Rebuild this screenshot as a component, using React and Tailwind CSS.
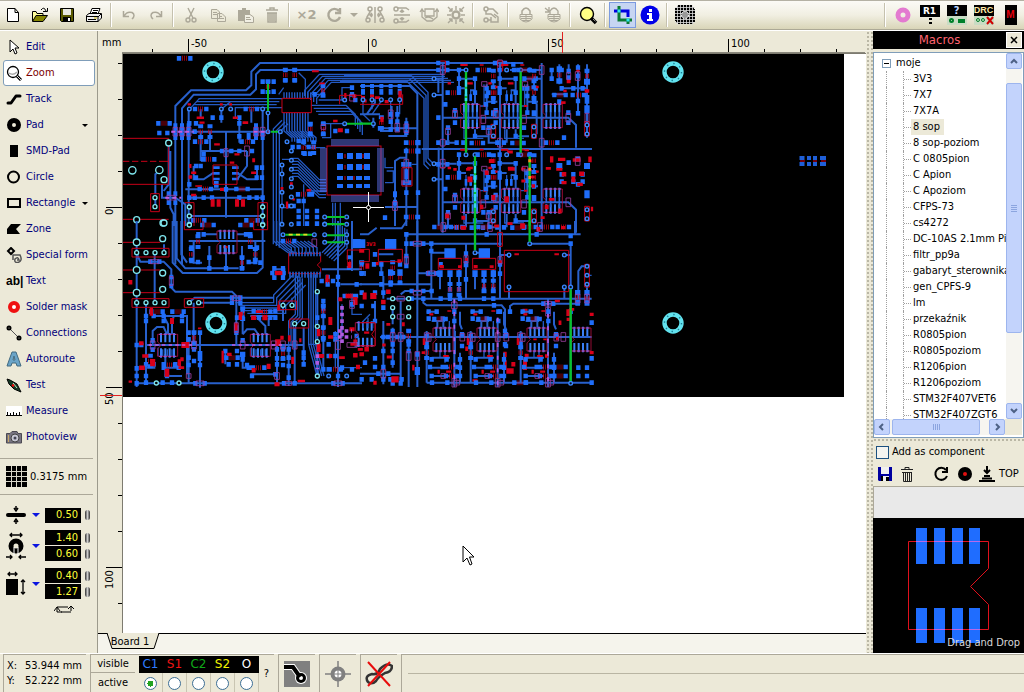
import React, { useState } from 'react';
import clsx from 'clsx';

/* ---------- small drawing helpers ---------- */

const box = ([x, y, w = 13, h = 14]) => `M${x - w / 2} ${y - h / 2}h${w}v${h}h${-w}z`;
const mark = ([x, y, w, h]) => box([x, y, w * 0.85, h * 0.85]);
const nums = (text) => text.trim().split(/\s+/).map((item) => item.split(',').map(Number));

// resistor bodies: two pads with a red outline between them
const upright = ([x, y]) => ({
  pads: box([x, y - 16, 15, 12]) + box([x, y + 16, 15, 12]),
  body: box([x - 5, y, 2, 13]) + box([x + 5, y, 2, 13]) + box([x, y, 2, 13]),
});
const flat = ([x, y]) => ({
  pads: box([x - 17, y, 13, 14]) + box([x + 17, y, 13, 14]),
  body: box([x, y, 2, 15]) + box([x - 6, y, 2, 15]) + box([x + 6, y, 2, 15]),
});

function Bus({ d, n, dx = 0, dy = 0, w = 4 }) {
  return (
    <g fill="none" stroke="#2359c4" strokeWidth={w}>
      {Array.from({ length: n }, (_, i) => (
        <path key={i} d={d} transform={`translate(${i * dx} ${i * dy})`} />
      ))}
    </g>
  );
}

function Block({ x = 0, y = 0, tracks = '', thin = '', red = '', pads = '', rv = '', rh = '', marks = '', links = '', vias = '', rings = '' }) {
  const list = (t) => (t ? nums(t) : []);
  const parts = [...list(rv).map(upright), ...list(rh).map(flat)];
  return (
    <g transform={`translate(${x} ${y})`}>
      <path d={thin} fill="none" stroke="#2258c0" strokeWidth="4" />
      <path d={tracks} fill="none" stroke="#2860cc" strokeWidth="6" />
      <path d={list(pads).map(box).join('') + parts.map((p) => p.pads).join('')} fill="#1f6dfa" />
      <path d={list(marks).map(mark).join('') + parts.map((p) => p.body).join('')} fill="#d8001a" />
      <path d={red} fill="none" stroke="#c80018" strokeWidth="3" />
      <path d={list(links).map(([a, b, w = 14, h = 26]) => box([a, b, w, h])).join('')} fill="none" stroke="#9a3f9e" strokeWidth="2.500" />
      {list(vias).map(([a, b], i) => (
        <circle key={i} cx={a} cy={b} r="5.500" fill="#03101f" stroke="#3b86ff" strokeWidth="4" />
      ))}
      {list(rings).map(([a, b, r = 6], i) => (
        <circle key={i} cx={a} cy={b} r={r} fill="#000" stroke="#7fe6ee" strokeWidth="4" />
      ))}
    </g>
  );
}

function Soic({ x, y, w = 58, h = 70 }) {
  const cols = [10, 23, 36, 49];
  return (
    <g transform={`translate(${x} ${y})`}>
      <path d={cols.map((c) => box([c, 10, 6, 28]) + box([c, h - 10, 6, 28])).join('')} fill="#3a80f5" />
      <path d={`M0 0H${w}V${h}H0V${h * 0.65}L10 ${h * 0.5}L0 ${h * 0.35}Z`} fill="none" stroke="#b01040" strokeWidth="2.500" />
      <path d={`M4 0H${w - 4}M4 ${h}H${w - 4}`} stroke="#a055dd" strokeWidth="3" strokeDasharray="9 5" />
    </g>
  );
}

function Hole({ x, y }) {
  return (
    <g>
      <circle cx={x} cy={y} r="8.5" fill="none" stroke="#62e2ee" strokeWidth="4.4" />
      <circle cx={x} cy={y} r="8.5" fill="none" stroke="#1a7d94" strokeWidth="1.4" strokeDasharray="1.4 5.28" />
    </g>
  );
}

// one channel of the upper right matrix, repeated
const channel = {
  tracks: 'M297 57V112M345 83V118M380 100V185M345 235V256H385M264 238V275H290M285 200V180M297 112H318M400 90V110M297 83H345M380 152H412M330 118H345V160M318 235V275',
  thin: 'M318 118V160M332 118V150M360 165H372V100M312 235V262H370',
  pads: '297,57 297,83 345,83 380,112 380,135 345,125 297,112 380,185 400,152 345,255 370,230 256,160 285,215 285,178 264,230 332,140,8,20 318,140,8,20 400,187,14,18 310,275 290,275',
  rv: '400,75 400,125',
  rh: '280,125 352,276 370,57',
  marks: '312,42,26,7 365,42,14,6 268,97,12,8 375,165,12,7 330,97,20,8 410,108,10,8',
  links: '373,99,16,14 285,189,14,22 370,205,14,24 264,241,14,18',
  red: 'M393 220H407V262H393Z',
  vias: '318,57 400,228 400,255',
};

// filter stage along the lower edge
const stage = {
  tracks: 'M200 272H235M215 300H255M232 300V322M200 330V415M215 410H270M200 350V485M215 440H270M215 465H270M300 272V310L306 325M250 300V325M300 395V485',
  thin: 'M240 390V410M255 390V425M268 322V300',
  pads: '206,272 230,272 206,293 248,293 200,345 200,370 215,415 260,415 210,438 215,465 248,438 300,415 306,340 306,375 216,485 262,485 283,272 283,300 300,440 300,465',
  rh: '240,294 275,438 275,465',
  rv: '200,395',
  marks: '214,280,14,8 268,270,14,6 258,405,20,7 266,452,18,8 192,362,9,24 236,452,8,14',
  links: '206,349,14,24 250,465,14,14 290,485,18,14 307,349,14,22',
};

function CircuitBoard() {
  const pins = Array.from({ length: 24 }, (_, i) => 332 + i * 2);
  const sidePins = Array.from({ length: 22 }, (_, i) => 148 + i * 2);
  const third = 'scale(.3333333)';
  return (
    <svg className="block h-auto w-full bg-black" viewBox="123 53 721 343" role="img" aria-label="Circuit board">
      {/* upper left */}
      <g transform={`translate(122 50) ${third}`}>
        <Bus d="M548 135V118L592 70H960" n={5} dx={9} dy={6} />
        <Bus d="M568 163H672L700 190V225" n={4} dx={7} dy={9} />
        <Bus d="M486 185V240L510 260V272" n={10} dx={8} />
        <Bus d="M486 142V124" n={11} dx={8} />
        <Bus d="M510 322H528L592 386H612" n={7} dy={9} />
        <Bus d="M480 208L454 234V580" n={3} dx={9} dy={5} />
        <Bus d="M230 143H480" n={3} dx={-8} dy={9} />
        <Block
          tracks="M160 640V165L207 118H372L388 103V62L414 36H960M180 640V172L215 131H385L402 115V70L415 57H960M200 525V175M148 242H440M422 175V525M312 242V500M438 95V242M298 175V215M352 200V275M236 175V200M388 175V215M264 242V300M236 242V330M375 300V345L345 385M235 300H375M140 280V400L125 420M120 400V440H160L190 460V525M100 440V468M100 430V370L112 360M215 345V385H245L275 365M405 355V385H375L345 365M190 415H420M200 440H420M200 467V525M422 467V525M200 495H422M145 300V470L155 490V525"
          thin="M202 175L232 143M298 175L325 152M340 200V170H480M530 65L550 85V125M600 100V130H570M470 130L485 110M590 147H665M605 218H665M626 218V260H600M690 110H660V147M480 340V460M505 325H480M610 290H560L530 270M540 240V262M500 470H480V520M545 400V525M560 420H640M640 455V525M632 455V525M655 455V525"
          pads="438,92 455,92 490,57 518,57 490,88 518,88 422,92 422,122 455,122 202,217 222,217 298,200 352,200 352,217 272,200 160,228,12,22 160,256,12,22 180,228,12,22 180,256,12,22 200,228,12,22 200,256,12,22 218,242 402,228,12,22 402,256,12,22 422,256,12,22 380,256,12,22 352,256 236,345 222,345 404,350 420,350 404,380 420,380 245,310 245,325 300,300 328,300 352,300 390,300 222,380 202,400 245,440 218,440 202,440 382,440 404,440 422,440 270,440 352,440 283,350,20,8 283,367,20,8 283,384,20,8 340,350,20,8 340,367,20,8 340,384,20,8 283,400,14,20 312,415 140,428,12,14 160,428,12,14 140,455,12,14 160,455,12,14 565,220 565,248 604,218 604,248 578,130 603,105 603,130 690,130 690,110 700,147 530,270 545,270 560,288 575,288 530,288 512,288 548,308 564,308 530,450 545,450 530,480 555,480 585,480 530,498 555,498 585,498 530,518 555,518 585,518 570,430 640,240 675,240 112,246 136,246 500,465 515,465"
          rh="188,22 126,217 236,174 388,174 250,414 360,414 236,272 376,272 260,325 545,430 230,508 390,508"
          rv="438,107 490,72 518,72 603,118 565,234 604,234 236,242 264,242 545,290 575,290"
          marks="202,160,12,8 298,160,10,8 326,160,10,8 580,61,24,7 235,200,26,9 240,215,18,8 340,200,18,9 370,215,20,10 345,310,18,8 215,365,18,9 205,378,12,12 395,365,18,9 230,405,24,6 330,335,16,8 272,456,14,26 290,456,14,26 345,456,14,26 363,456,14,26 300,415,14,12 205,345,8,14 600,97,20,6 670,135,8,22 640,210,16,8 480,412,10,10 508,400,10,14 495,462,8,24 515,445,8,8 560,418,16,9 655,238,18,14 697,135,14,12 285,280,20,8 395,328,10,14 215,432,18,8"
          red="M3 262H140V400H3M3 331H22M30 331H49M57 331H76M84 331H103M111 331H140M86 428H112V482H86ZM3 505H140M188 455H216V525M408 525V455H436V525M273 342H345V400H273ZM480 142H568V185H480ZM653 133H720M653 133V160"
          links="160,242 180,242 200,242 402,242 422,242 148,440,26,14 375,300,14,30 690,140,14,20 604,228,14,14 312,305,12,24"
          vias="202,174 298,174 326,174 422,174 438,186 438,242 475,242 508,328 480,342 508,355 508,383 480,369 508,408 480,424 508,438 480,465 508,465 668,147 668,218 495,272 508,300 608,498 674,498 608,519"
          rings="140,276,9 31,358,11 112,357,11 126,386,9 99,440 99,467 202,468 422,468 202,495 422,495 44,506,9 123,516,9 202,520 422,520"
        />
        <path d="M438 98V180M447 242H468M675 218H720M615 498H668M615 519H668" stroke="#08c22c" strokeWidth="6" />
        <path d="M148 242H215M395 242H440M130 440H178" stroke="#c45ae0" strokeWidth="6" strokeDasharray="12 9" />
      </g>

      {/* upper right */}
      <g transform={`translate(360 50) ${third}`}>
        <Bus d="M-60 92H142L192 142V340L206 354" n={3} dx={6} dy={-9} />
        <Block
          tracks="M-60 36H490M-60 57H320M0 105H150L172 128V720M248 36V545M236 290V525M420 36V545M545 36V525M235 83V125M218 83H245M218 132H245M218 338H290M218 385H245M248 200H625L648 222V290M185 294H696M0 190H60M95 165V240H60M112 165V230M40 200V230M139 200V255H85M60 232H174M105 525V330L120 320H140M139 290V525M75 468H172M45 145V155L20 190M450 57H545M490 83H545M575 57V83M598 40V100M626 40V70M654 40V190M681 40V260M248 454H625L648 476V545M445 200H480M520 130L530 160V250M605 112H680M575 130H620"
          thin="M9 150V190L30 210M36 150V175M64 150L36 190M92 150V190M119 150V190M75 320V350H100M75 395H100M80 360H100V395M155 340H172"
          pads="92,190 112,190 92,212 112,212 92,235 112,235 139,222,12,22 139,245 60,232 174,275,16,16 174,300,16,16 139,275 139,300 174,425 139,425 174,498 139,498 75,500 105,430,12,18 105,455,12,18 9,105,12,12 36,105,12,12 64,105,12,12 92,105,12,12 119,105,12,12 9,122,12,18 36,122,12,18 64,122,12,18 92,122,12,18 119,122,12,18 235,36 262,36 235,57 262,57 235,275 262,275 235,200 405,36 435,36 460,40 462,57 598,55,16,18 598,90,18,16 626,80 626,60 654,50 681,60 681,92,18,18 654,75 605,112 640,112 668,112 654,150 681,145,14,26 681,175,16,24 654,187 598,152 612,260 625,185 625,215 605,57 575,83 575,57 598,345,18,18 626,335 654,325 681,345,18,18 681,430,16,24 654,400 605,370 640,370 668,370 605,392 640,392 668,392 235,340 262,340 130,340 148,340 130,395 148,395 139,370,12,30"
          rh="510,83 510,112 600,132 655,132 155,275 155,300 155,498 575,275"
          rv="598,72 681,75 64,215"
          marks="15,150,12,10 52,140,18,10 80,152,14,12 36,135,14,10 9,140,14,12 120,130,12,26 66,205,12,18 626,92,14,12 654,60,12,8 681,120,16,12 615,120,12,8 610,155,16,10 605,325,26,12 650,327,28,12 690,325,12,20 612,370,16,16 665,368,18,16 640,385,14,20 612,395,18,12 660,400,20,12 598,355,22,10 575,325,12,22 565,352,18,10 450,303,20,10 500,298,16,7 455,354,26,12 490,354,16,10 510,330,12,10 510,358,12,10 518,378,14,8 696,474,8,16"
          red="M0 160H128V130M126 350H156V405H126ZM241 30H256V66M241 350H256M413 30H428V60H413ZM674 212H688V255H674ZM674 466H688V510H674Z"
          links="248,57 248,338 248,275,14,20 420,36,14,18 420,275 92,190 112,230 139,232 545,57 545,275 653,75 681,200,12,26 653,330 139,360,14,70 105,465 626,75,12,20 625,200 625,454"
          vias="222,83 222,132 222,338 222,385 482,57 509,57 482,311 509,311 345,311 681,222 681,249 40,218 681,476 681,503 92,146 64,146 36,146 119,146 9,146"
        />
        {[0, 254].map((dy) =>
          [0, 122, 247].map((dx) => (
            <g key={`${dx}-${dy}`} transform={`translate(${dx} ${dy})`}>
              {dx < 247 && <Block {...channel} />}
              <Soic x={302} y={160} />
              <path d="M312 182V200M325 182V215M338 182V200M351 182V215" stroke="#2a66dc" strokeWidth="5" />
            </g>
          ))
        )}
        <Block marks="395,330,20,14 325,355,16,10 380,365,14,16 330,385,18,20 285,355,12,10 400,440,14,18 440,445,16,22 365,468,12,16 310,500,14,14 262,495,14,16 520,405,12,12 490,390,14,10 560,468,14,16 575,445,20,10 600,480,12,18 450,518,18,10 548,500,14,10" />
        <path d="M318 62V305M482 62V305M509 316V525M345 316V525M0 218H34" stroke="#08c22c" strokeWidth="7" />
        <path d="M318 85V150M345 345V470" stroke="#35d8e8" strokeWidth="7" strokeDasharray="22 6" />
        <path d="M509 325V400" stroke="#ff8a1c" strokeWidth="8" strokeDasharray="9 16" />
      </g>

      {/* lower left */}
      <g transform={`translate(122 220) ${third}`}>
        <Bus d="M515 160L455 222V245H340" n={5} dx={9} dy={8} />
        <Bus d="M560 160V370L585 465" n={4} dx={7} />
        <Bus d="M520 160V280L500 300V372" n={4} dx={7} dy={4} />
        <Bus d="M455 0V60L478 80L505 100" n={3} dx={9} />
        <Bus d="M600 95L640 55V0" n={6} dx={7} dy={5} />
        <Bus d="M508 100V80L480 60" n={8} dx={11} />
        <Block
          tracks="M152 0V125L182 156H405L422 140V0M164 0V112L190 142H350M178 0V100L195 125M44 0V498M98 95V245M72 245V490M126 95V70M45 100L55 122H125L148 145V200L160 212H330L343 225V372M200 245L218 230H455M230 245H330M200 60H430M312 80V142M262 75V142M360 75V142M215 60V125H240M400 60V125H380M245 40H285M345 40H385M45 487H720M70 372H545M95 285H195V460M92 372V330L105 318H125L135 340M215 245V360M125 285L138 310V340M155 285L150 310V340M200 360V485L230 487M234 335V500M240 372H360M343 300V372M385 285H465M405 290L430 315V340M440 290V315M362 340L375 325H398L412 345M362 260V340M362 400V440H390M500 372V495M518 320V485M545 320V430M483 255V300M586 212V465M604 240V450M648 0V498M690 150V0M385 460H465M465 370V495M120 440H180M130 400V465H180M72 440H100M310 390V430M455 145H490M600 145H720M655 190H720"
          thin="M108 405V380M122 405V385M136 405V385M150 405V385M388 405V380M402 405V385M416 405V385M430 405V385M510 230V255M640 330V440H720M660 250V350M690 220V280H720M560 370H586"
          pads="229,40 245,40 385,40 372,40 208,80 208,120 228,123 405,80 400,123 380,123 262,142 312,142 360,142 415,125 262,110 360,110 457,142 483,142 457,170 483,170 617,168 648,168 617,190 648,190 704,68,24,28 704,190 85,122 112,122 148,168,12,14 148,195,12,14 330,230 355,230 330,245 355,245 362,268 345,290 362,290 343,320 343,335 125,285 180,285 125,300 180,300 95,285 72,285 72,300 395,270 460,270 395,290 460,290 362,358 362,400,16,16 375,432 362,415 200,335 216,335 234,335 200,355 216,385 234,405,14,30 200,410 216,420 200,432 234,432 95,430 72,430 72,465 44,465 72,485 44,372 58,372 44,442 92,358 92,386 125,430 160,430 125,440 170,440 135,465 150,485 122,485 220,487 248,487 44,487 380,440 465,430 390,465 460,460 465,412 483,412 483,432 465,385 483,385 500,385 310,390 345,390 320,430 345,430 500,410 500,435 545,395 545,410 545,430 500,470 518,487 486,487 604,240 604,262 604,285 604,320 620,370 640,340 620,445 604,445 586,290 640,355 690,225 690,250 640,405 620,405 604,355 648,465 634,487 662,487 690,445 660,440 704,370 704,345"
          rh="258,12 372,12 500,60 616,180 105,272 168,272 428,272 428,290 410,440 142,432 640,445 685,225 330,410 468,156"
          rv="228,62 400,100 208,100 385,62 360,125 85,420 483,398 362,278 604,270 604,335 682,125 216,350"
          marks="25,184,14,16 233,322,12,6 58,367,16,14 70,405,22,12 88,272,12,28 92,425,18,26 60,440,20,16 150,300,14,22 180,415,12,14 172,425,12,24 135,455,16,28 25,482,12,8 355,285,12,28 395,290,18,16 430,290,16,18 412,272,24,10 470,260,10,20 468,365,20,24 480,350,12,14 502,352,10,22 512,418,10,26 465,490,18,14 538,480,26,9 535,358,8,14 440,436,14,18 395,448,14,16 302,408,8,44 322,400,16,12 342,318,12,26 590,380,14,30 598,405,18,14 626,405,12,14 625,300,14,28 655,235,14,14 680,225,22,16 700,240,16,28 690,325,18,14 700,365,14,22 715,385,18,10 590,335,12,26 660,410,20,10 700,403,16,16 708,438,14,16 470,156,26,14 616,172,10,26 682,132,14,22 692,370,16,10 626,348,18,12 310,78,16,8 190,372,28,22 178,440,20,10"
          red="M3 64H115M3 147H115M3 215H115M30 82H141V108H30ZM30 233H141V259H30ZM187 0V26H243V0M395 0V26H437V0M187 233H245V259H187ZM470 240H524V266H470ZM503 294H560V321H503ZM500 97H596V122L586 132L596 142V158H500ZM676 118V87H720"
          links="98,122,26,12 148,180,12,26 343,232,24,14 343,320,12,30 362,372,14,24 92,372,14,24 216,372,14,24 200,465,14,14 483,372,14,24 518,372,14,24 455,372,14,24 234,487,24,14 465,465,14,20 577,65,14,22 648,487,24,14 648,372 690,372,30,14 690,250,14,24 500,487,18,12"
          rings="126,6,9 44,64,10 122,53,9 44,95 72,95 99,95 126,95 44,147,10 122,156,9 44,215,10 122,205,9 44,245 72,245 99,245 126,245 202,12 422,12 202,245 230,245 483,253 510,253 518,308 545,308 586,212 586,316 586,362 586,465 103,486 171,486"
          vias="483,41 577,41 608,10 608,41 608,64 674,10 674,41 674,64 480,10 508,10 620,465 674,465"
        />
        <path d="M660 255V368M648 330H690M648 348H690M586 400V445" stroke="#b05ae0" strokeWidth="11" strokeDasharray="11 9" />
        <Bus d="M504 92V106" n={11} dx={9} w={5} />
        <Bus d="M504 152V170" n={11} dx={9} w={5} />
        <Soic x={285} y={30} w={60} h={66} />
        <Soic x={107} y={340} w={60} h={66} />
        <Soic x={385} y={340} w={60} h={66} />
        <Soic x={700} y={305} w={60} h={69} />
        <path d="M615 10H668M615 43H668M615 64H668M490 41H570" stroke="#08c22c" strokeWidth="6" />
        <path d="M500 41H560" stroke="#e8d820" strokeWidth="5" strokeDasharray="12 10" />
        <path d="M80 372H210M330 372H480" stroke="#c45ae0" strokeWidth="5" strokeDasharray="10 10" />
      </g>

      {/* lower right */}
      <g transform={`translate(360 220) ${third}`}>
        <Block
          tracks="M0 40H25L50 20M60 22H125L140 0M139 40H662M160 68H425M172 0V348M214 68V233M510 68H632V480M0 190H215M122 220L135 210H215M80 233H695M190 233V245L200 253H425L435 265V340M450 272V255L460 248H655M60 348H695M70 300V490M122 240V480M98 320V440M0 458H120M200 485H695M146 348V498M172 348V498M98 260V310M64 120V165M139 45V130M100 100H55M215 95H260M240 150V205M270 160V205M297 145V205M318 70V233M345 150V205M372 160V205M400 145V205M345 95H375M420 0V233M447 110V102H420M613 102H632M447 200V233M613 200V233M655 230V150L665 136H685M681 190V235M175 157H235M283 233V498M413 290V498M564 233V498M285 330V400M70 233V165M15 150V165M645 0V40M45 240V300"
          thin="M10 322V300L30 280M24 322V290M38 322V300M695 163H685"
          pads="5,68,22,26 92,70,34,32 270,97,34,30 373,97,34,30 5,130 5,158 64,130 92,155,16,20 120,155,16,20 64,158 120,130 92,185 120,185 42,130 45,100 139,105 139,135 64,190 92,190 242,130 240,158,16,20 270,158,16,20 297,158,16,20 270,205 297,205 345,158,16,20 372,158,16,20 400,158,16,20 372,205 400,205 318,98 318,130,14,18 318,175 420,130 420,158 204,157 228,157 214,68 214,90 155,68 190,68 139,40 139,68 420,272 450,272 402,253 380,40 530,40 632,45 632,68 270,233 300,233 372,233 400,233 242,233 155,210 190,210 155,233 190,233 215,210 5,215 45,215 5,255 40,255 70,215 70,260 45,300 70,348 84,348 112,348 130,348 98,330 98,370 70,390 98,390 98,425 45,412 70,438 45,438 15,425 55,458 85,458 5,475 35,475 70,475 98,487 122,487 172,400 172,450,16,24 146,330 146,370 146,390 653,215,16,16 681,215,16,16 653,245,14,18 681,245,14,18 550,248 580,248 632,272 695,305 695,412 695,485 681,440 681,465 655,440 655,465 435,345 435,370 435,330"
          rh="240,18 290,18 372,18 510,18 560,18 610,18 600,438 600,465 480,485 108,475"
          rv="98,140 270,205 297,205 372,195 400,195 5,140 92,170 120,170 681,232 653,230 146,345"
          marks="22,135,14,20 52,128,10,12 118,120,14,12 5,90,18,12 245,137,16,12 300,137,14,10 320,115,10,12 347,137,14,12 395,137,14,10 420,122,14,10 470,100,16,7 590,100,16,7 310,20,20,14 410,15,18,10 488,15,18,20 610,20,16,12 535,25,14,16 85,212,16,16 40,225,22,22 14,225,14,24 70,243,16,16 495,270,18,16 625,275,14,24 592,240,18,8 635,265,18,10 695,280,14,12 525,355,12,6 555,355,12,6 495,430,14,40 500,405,14,16 435,430,12,28 450,450,26,20 435,400,12,18 460,430,14,16 20,385,16,16 5,400,16,14 88,408,18,10 130,310,10,14 105,475,26,22 45,485,12,14 600,305,10,16 560,405,12,12 695,395,14,12 625,295,12,12 592,350,10,18 160,440,8,20 190,395,12,10 85,310,14,10 72,372,12,10 345,478,18,8 20,335,18,8 320,383,10,16"
          red="M433 88H626V212H433ZM0 85H28V122H0M55 85H127V122H55ZM235 112H304V145H235ZM338 112H407V145H338ZM413 34H427V76H413ZM674 130H688V198H674ZM0 305H45M0 375H45V355L35 340L45 325V305"
          links="172,68,24,14 214,157,24,14 139,118,12,22 318,115,12,22 420,118,12,22 122,233,22,14 122,287,20,14 172,215,24,14 98,348 122,348 146,405 283,253,16,20 564,248,20,14 564,272 70,458 172,405 413,348 200,348 330,348 480,348 610,348 653,233 681,233 283,485 413,485 564,485 250,18 540,18 390,18"
          vias="345,95 509,68 447,102 613,102 447,198 613,198 632,198 681,136 681,163 681,190 632,487"
          rings="98,233 146,233 98,260 146,260 98,287 146,287"
        />
        <text x="18" y="74" fontSize="15" fill="#e3001b" fontWeight="bold">3V3</text>
        {[0, 132, 282, 414].map((dx) => (
          <g key={dx} transform={`translate(${dx} 0)`}>
            {dx < 400 && <Block {...stage} />}
            <Soic x={219} y={321} w={60} h={69} />
          </g>
        ))}
        <path d="M345 0V88M509 0V62M632 205V480" stroke="#08c22c" strokeWidth="7" />
        <path d="M283 235V498M413 290V498M564 240V498" stroke="#b05ae0" strokeWidth="5" strokeDasharray="12 26" />
      </g>

      {/* processor in the middle */}
      <rect x="327" y="145" width="54" height="49" fill="#000" stroke="#c80018" />
      <path d={pins.map((p) => `M${p} 138v7M${p} 194v7`).join('')} stroke="#5d6fe8" />
      <path d={sidePins.map((p) => `M320 ${p}h7M377 ${p}h7`).join('')} stroke="#5d6fe8" />
      <path
        d={[340, 350, 359, 367].flatMap((a) => [155, 166, 177, 185].map((b) => box([a, b, 6, b > 170 ? 4 : 6]))).join('')}
        fill="#1f6dfa"
      />
      <path d="M345 153v4M345 164v4M345 175v4M363 153v4M363 164v4M354 175v4" stroke="#d00018" />

      {/* loose parts at the right of the board */}
      <path d={nums('802,157,5,4 802,163,5,4 809,157,4,4 809,163,4,4 815,157,4,4 815,163,4,4 823,157,6,4 823,163,6,4').map(box).join('')} fill="#1f5fd8" />
      <path d="M800 160h5M813 160h4M821 160h5" stroke="#e3001b" />

      <Hole x={213} y={71} />
      <Hole x={216} y={322} />
      <Hole x={673} y={71} />
      <Hole x={673} y={322} />
      <path d="M368.500 191V221M353 206.500H384" stroke="#fff" />
      <circle cx="368.500" cy="206.500" r="2" fill="#000" stroke="#fff" />
    </svg>
  );
}

/* ---------- icons ---------- */

function Svg({ size = 20, children, ...rest }) {
  return (
    <svg width={size} height={size} viewBox={`0 0 ${size} ${size}`} fill="none" aria-hidden="true" className="shrink-0" {...rest}>
      {children}
    </svg>
  );
}

const grey = '#aca899';

const icons = {
  fresh: <path d="M4.500 3.500H12L15.500 7.500V16.500H4.500ZM12 3.500V7.500H15.500" fill="#fff" stroke="#000" />,
  open: (
    <>
      <path d="M2.500 16V6.500H6L7 8.500H13V10" fill="#ffff9c" stroke="#000" />
      <path d="M2.500 16.500L6 10.500H17.500L13 16.500Z" fill="#848400" stroke="#000" />
      <path d="M11 5Q14 1 16 6M17.500 3V6.500H13" stroke="#000" />
    </>
  ),
  save: (
    <>
      <path d="M3.500 3.500H16.500V16.500H4.500L3.500 15.500Z" fill="#5a5a00" stroke="#000" />
      <rect x="6" y="4" width="8" height="6" fill="#e8e8e0" />
      <rect x="6" y="12" width="8" height="5" fill="#000" />
      <rect x="11" y="13" width="2" height="3" fill="#fff" />
    </>
  ),
  print: (
    <>
      <path d="M6 9L8 3.500H16L14 9Z" fill="#fff" stroke="#000" />
      <path d="M2.500 10.500L5 8.500H17.500V13L14 16.500H2.500Z" fill="#eee" stroke="#000" />
      <path d="M2 11.500H14V17M9 5.500H14M8 7.500H13M14 12L17 9M4 14.500H12" stroke="#000" />
      <path d="M10 13H13" stroke="#c8b400" />
    </>
  ),
  undo: <path d="M4.500 6V11.500H10M5 11Q8 6 13 7.500Q17 10 13 14" stroke={grey} strokeWidth="1.5" />,
  redo: <path d="M15.500 6V11.500H10M15 11Q12 6 7 7.500Q3 10 7 14" stroke={grey} strokeWidth="1.5" />,
  cut: (
    <g stroke={grey} strokeWidth="1.4">
      <path d="M7 3L12 13M13 3L8 13" />
      <circle cx="7" cy="15" r="2" />
      <circle cx="13" cy="15" r="2" />
    </g>
  ),
  copy: <path d="M3.500 4.500H9L11.500 7V13.500H3.500ZM5 7.500H9M5 9.500H9M9.500 8.500H14L17.500 12V16.500H9.500ZM11 11.500H14M11 13.500H16" fill="#ece9d8" stroke={grey} />,
  paste: (
    <>
      <path d="M3 5H7V3H11V5H15V16H3Z" fill={grey} />
      <path d="M9.500 9.500H15L18.500 12V17.500H9.500ZM11 12.500H15M11 14.500H16" fill="#f1efe4" stroke={grey} />
    </>
  ),
  trash: <path d="M4 5H16M8 5V3H12V5M5 8H15M6 8V17H14V8M8 8V16M10 8V16M12 8V16" stroke={grey} strokeWidth="1.5" />,
  rotate: <path d="M15 6A6 6 0 1 0 16 12M16 3V8H11" stroke={grey} strokeWidth="2.4" />,
  mirror: (
    <g stroke={grey} strokeWidth="1.5">
      <path d="M10 2V18M8 10H5M12 10H15M5 5V7L2 12V14M15 5V7L18 12V14M7 8L5 10L7 12M13 8L15 10L13 12" />
      <circle cx="5" cy="4" r="2" />
      <circle cx="15" cy="4" r="2" />
      <circle cx="3" cy="15" r="2" />
      <circle cx="17" cy="15" r="2" />
    </g>
  ),
  flip: (
    <g stroke={grey} strokeWidth="1.5">
      <path d="M2 10H18M10 8V5M10 12V15M5 3H14L17 5M5 17H14L17 15M8 7L10 5L12 7M8 13L10 15L12 13" />
      <circle cx="4" cy="4" r="2" />
      <circle cx="4" cy="16" r="2" />
    </g>
  ),
  snap: <path d="M6 4H15V11H6ZM3 4V12L8 16H13L18 12V4M1 7L3 4L5 7M16 7L18 4L20 7M6 13Q10 11 14 14" stroke={grey} strokeWidth="1.3" />,
  center: (
    <g stroke={grey} strokeWidth="1.4">
      <circle cx="10" cy="10" r="3.5" strokeWidth="2.400" />
      <path d="M10 1V5M10 15V19M1 10H5M15 10H19M2 2L6 6M18 2L14 6M2 18L6 14M18 18L14 14M3 6H6V3M17 6H14V3M3 14H6V17M17 14H14V17" />
    </g>
  ),
  shape: (
    <g stroke={grey} strokeWidth="1.5">
      <circle cx="5" cy="4" r="2" />
      <circle cx="5" cy="15" r="2" />
      <path d="M5 6V9H10L15 13M7 4H12L17 9M10 12V17H17V12L13 9M7 15H10" />
    </g>
  ),
  lock: (
    <>
      <path d="M6 9V6Q10 0 14 6V9" stroke={grey} strokeWidth="1.5" />
      <path d="M4 9.500H16V14Q10 20 4 14Z" stroke={grey} />
      <path d="M4 11.500H16M5 13.500H15M6 15.500H14M10 10V16" stroke={grey} />
    </>
  ),
  unlock: (
    <>
      <path d="M7 9V6Q11 0 15 6V9M2 3L7 7M2 7H6M6 2V6" stroke={grey} strokeWidth="1.3" />
      <path d="M5 9.500H17V14Q11 20 5 14Z" stroke={grey} />
      <path d="M5 11.500H17M6 13.500H16M7 15.500H15M11 10V16" stroke={grey} />
    </>
  ),
  loupe: (
    <>
      <circle cx="9" cy="9" r="6.5" fill="#ffff84" stroke="#000" strokeWidth="1.4" />
      <path d="M13 13L18 18" stroke="#000" strokeWidth="3.6" />
      <path d="M15 14L18 17" stroke="#ddd" strokeDasharray="1 1" />
    </>
  ),
  crop: (
    <>
      <path d="M1 6H15V12" stroke="#0000e0" strokeWidth="3" />
      <path d="M6 1V15H19M15 15V19" stroke="#0a7a32" strokeWidth="3" />
      <path d="M4.500 6H7.500M13.500 15H16.500" stroke="#2ee8f0" strokeWidth="3" />
    </>
  ),
  info: (
    <>
      <circle cx="10" cy="10" r="9.5" fill="#0000e8" />
      <path d="M9 4H12V7H9ZM7 8H12V14H13V16H7V14H9V10H7Z" fill="#fff" />
    </>
  ),
  mesh: (
    <>
      <path d="M3 0H17V2H19V4H20V17H18V19H3V18H1V16H0V3H2V1H3Z" fill="#000" />
      <path d="M2.500 0V20M5.500 0V20M8.500 0V20M11.500 0V20M14.500 0V20M17.500 0V20M0 2.500H20M0 5.500H20M0 8.500H20M0 11.500H20M0 14.500H20M0 17.500H20" stroke="#ddd" strokeWidth=".8" />
      <circle cx="10" cy="10" r="3.500" fill="#999" stroke="#fff" strokeDasharray="2 1" />
    </>
  ),
  disc: <circle cx="10" cy="10" r="5" stroke="#e37ad0" strokeWidth="5" />,
};

function ToolButton({ label, active, children, first }) {
  return (
    <button
      type="button"
      aria-label={label}
      className={clsx(
        'flex h-[26px] items-center justify-center border',
        first ? 'w-[26px]' : 'w-[27px]',
        active ? 'border-[#7b9ae0] bg-[#c6d5f2]' : 'border-transparent'
      )}
    >
      {children}
    </button>
  );
}

function Separator() {
  return (
    <div className="flex w-2 justify-center">
      <div className="h-6 w-0.5 border-l border-[#c5c1ae] bg-white" />
    </div>
  );
}

const toolGroups = [
  ['fresh', 'open', 'save', 'print'],
  ['undo', 'redo'],
  ['cut', 'copy', 'paste', 'trash'],
];

function Tool({ name, ...rest }) {
  return (
    <ToolButton label={name} {...rest}>
      <Svg>{icons[name]}</Svg>
    </ToolButton>
  );
}

function Toolbar() {
  return (
    <header className="flex h-[30px] shrink-0 items-center border-t border-b border-t-[#b4b1a4] border-b-[#aca996] bg-gradient-to-b from-[#fbfaf6] via-[#f1efe2] to-[#d9d5b8]">
      {toolGroups.map((group, i) => (
        <React.Fragment key={i}>
          {group.map((name) => (
            <Tool key={name} name={name} first={name === 'fresh'} />
          ))}
          <Separator />
        </React.Fragment>
      ))}
      <ToolButton label="Duplicate">
        <span className="font-['DejaVu_Sans'] text-[13px] font-bold text-[#aca899]">×2</span>
      </ToolButton>
      <Tool name="rotate" />
      <button type="button" aria-label="Rotate options" className="flex w-3.5 justify-center">
        <Svg size={8}><path d="M0 2H8L4 6Z" fill={grey} /></Svg>
      </button>
      {['mirror', 'flip', 'snap', 'center'].map((name) => <Tool key={name} name={name} />)}
      <Separator />
      <Tool name="shape" />
      <Separator />
      <Tool name="lock" />
      <Tool name="unlock" />
      <Separator />
      <Tool name="loupe" />
      <Separator />
      <Tool name="crop" active />
      <Tool name="info" />
      <Separator />
      <Tool name="mesh" />
      <div className="ml-auto flex items-center">
        <Separator />
        <Tool name="disc" />
        <ToolButton label="Component names">
          <span className="flex flex-col items-center">
            <span className="h-3 w-5 bg-black text-center font-['DejaVu_Sans'] text-[9px] leading-3 font-bold text-white">R1</span>
            <Svg size={8}><path d="M3 1H6V3H3ZM3 5H6V7H3Z" fill="#000" /></Svg>
          </span>
        </ToolButton>
        <ToolButton label="Properties">
          <span className="flex flex-col">
            <span className="h-[11px] w-5 bg-black text-center text-[11px] leading-[11px] font-bold text-[#bcd4ff]">?</span>
            <span className="flex h-[9px] w-5 items-center justify-around bg-[#c9dcc4]">
              <span className="size-[5px] rounded-full border-2 border-[#00802a]" />
              <span className="h-1 w-[7px] bg-[#00802a]" />
            </span>
          </span>
        </ToolButton>
        <ToolButton label="Design rule check">
          <span className="flex flex-col">
            <span className="h-[11px] w-5 bg-black text-center font-['Liberation_Sans'] text-[9px] leading-[11px] font-bold text-[#ffe9a8]">DRC</span>
            <svg width="20" height="9" viewBox="0 0 20 9" fill="none" className="bg-[#c9dcc4]">
              <circle cx="4" cy="4" r="1.500" stroke="#00802a" />
              <circle cx="9" cy="4" r="1.500" stroke="#00802a" />
              <path d="M13 1L19 8M19 1L13 8" stroke="#d00000" strokeWidth="2" />
            </svg>
          </span>
        </ToolButton>
        <ToolButton label="Macros">
          <span className="h-5 w-3 bg-black text-center font-['Liberation_Sans'] text-[10px] leading-5 font-bold text-red-600">M</span>
        </ToolButton>
      </div>
    </header>
  );
}

const tools = [
  { label: 'Edit', icon: <path d="M4 1V13L7 10L9 15L11 14L9 9H13Z" fill="#fff" stroke="#000" /> },
  {
    label: 'Zoom',
    icon: (
      <>
        <circle cx="7" cy="7" r="5.500" fill="#fff" stroke="#000" strokeWidth="1.300" />
        <path d="M3 8Q7 11 11 7" stroke="#aaa" strokeWidth="1.500" />
        <path d="M11 11L15 15" stroke="#000" strokeWidth="3" />
        <path d="M11 11L15 15" stroke="#ddd" />
      </>
    ),
  },
  { label: 'Track', icon: <path d="M2 12H5L10 5H14" stroke="#000" strokeWidth="3" strokeLinecap="round" strokeLinejoin="round" /> },
  { label: 'Pad', menu: true, icon: <circle cx="8" cy="8" r="4.500" stroke="#000" strokeWidth="5" /> },
  { label: 'SMD-Pad', icon: <path d="M4 2H12V14H4Z" fill="#000" /> },
  { label: 'Circle', icon: <circle cx="7.500" cy="8" r="5.500" stroke="#000" strokeWidth="2" /> },
  { label: 'Rectangle', menu: true, icon: <path d="M2 4H14V12H2Z" stroke="#000" strokeWidth="2" /> },
  { label: 'Zone', icon: <path d="M1 13V8L5 3H15L10 8L14 13Z" fill="#000" /> },
  {
    label: 'Special form',
    icon: (
      <>
        <path d="M5 1L8 4L5 7L2 4Z" stroke="#000" strokeWidth="2" />
        <path d="M7 13V8H14Q17 14 12 15.500Q8 16 9 12Q12 9 13 13H11" stroke="#555" strokeWidth="1.500" />
      </>
    ),
  },
  { label: 'Text', text: 'ab|' },
  { label: 'Solder mask', icon: <circle cx="8" cy="8" r="4" stroke="#ef1010" strokeWidth="4" fill="#fff" /> },
  {
    label: 'Connections',
    icon: (
      <g stroke="#000">
        <path d="M4 4L12 12" stroke="#555" />
        <circle cx="3" cy="3" r="1.500" strokeWidth="2" />
        <circle cx="13" cy="13" r="1.500" strokeWidth="2" />
      </g>
    ),
  },
  { label: 'Autoroute', icon: <path d="M1 15L6 1H10L15 15H11L10 12H6L5 15ZM7 9H9L8 5Z" fill="#6aa4c8" stroke="#436a80" /> },
  {
    label: 'Test',
    icon: (
      <>
        <path d="M1 2L4 3L11 7L15 15L8 12L3 7Z" fill="#163c28" stroke="#000" />
        <path d="M7 6L11 11" stroke="#c8e8c8" />
        <path d="M6 8L8 9" stroke="#f00" strokeWidth="2" />
      </>
    ),
  },
  {
    label: 'Measure',
    icon: (
      <>
        <path d="M0 3H16V12H0Z" fill="#fff" />
        <path d="M0 12.500H16M1.500 9V12M4.500 10V12M7.500 9V12M10.500 10V12M13.500 9V12" stroke="#000" />
      </>
    ),
  },
  {
    label: 'Photoview',
    icon: (
      <>
        <path d="M0.500 4.500H4L6 2.500H11L12 4.500H15.500V14H0.500Z" fill="#777481" stroke="#4c4a52" />
        <circle cx="9" cy="9" r="4" fill="#c8c8d4" stroke="#444" />
        <circle cx="9" cy="9" r="1.500" fill="#445" />
        <path d="M2.500 6V13" stroke="#c8a868" />
      </>
    ),
  },
];

const sizeGroups = [
  {
    label: 'Track width',
    values: ['0.50'],
    icon: <path d="M10 1V4M8 3L10 6L12 3M10 19V16M8 17L10 14L12 17" stroke="#000" strokeWidth="1.500" />,
    bar: true,
  },
  {
    label: 'Pad size',
    values: ['1.40', '0.60'],
    icon: (
      <g stroke="#000">
        <path d="M4 3H16M6 1L4 3L6 5M14 1L16 3L14 5M0 25H6M4 23L6 25L4 27M20 25H13M15 23L13 25L15 27" strokeWidth="1.300" />
        <circle cx="10" cy="14" r="5" strokeWidth="5" />
        <path d="M8 15V24M12 15V24" stroke="#fff" />
      </g>
    ),
  },
  {
    label: 'SMD size',
    values: ['0.40', '1.27'],
    icon: (
      <>
        <path d="M0 9H12V25H0Z" fill="#000" />
        <path d="M2 4H11M4 2L2 4L4 6M9 2L11 4L9 6M17 10V24M15 12L17 10L19 12M15 22L17 24L19 22" stroke="#000" strokeWidth="1.300" />
      </>
    ),
  },
];

function Sidebar() {
  const [current, setCurrent] = useState('Zoom');
  return (
    <aside className="flex w-[98px] shrink-0 flex-col border-r border-[#9c9a8c] pt-[3px]">
      <nav className="flex flex-col">
        {tools.map((tool) => (
          <button
            key={tool.label}
            type="button"
            onClick={() => setCurrent(tool.label)}
            className={clsx(
              'mr-0.5 ml-[3px] flex h-[26px] items-center gap-1 rounded-[3px] border pl-0.5 text-left',
              current === tool.label ? 'border-[#7f9db9] bg-white text-[#7b0000]' : 'border-transparent text-[#00007b]'
            )}
          >
            {tool.text ? (
              <span className="w-4 shrink-0 font-['Liberation_Sans'] text-xs font-bold whitespace-nowrap text-black">{tool.text}</span>
            ) : (
              <Svg size={16}>{tool.icon}</Svg>
            )}
            <span className="whitespace-nowrap">{tool.label}</span>
            {tool.menu && (
              <Svg size={6} className="mr-1.5 ml-auto shrink-0"><path d="M0 2H6L3 5Z" fill="#000" /></Svg>
            )}
          </button>
        ))}
      </nav>

      <div className="mt-2 mr-1 flex h-[37px] items-center gap-[3px] border-t border-b border-[#aca899] pl-1.5">
        <Svg size={21}>
          <path d="M0 0H21V21H0Z" fill="#000" />
          <path d="M5.500 0V21M10.500 0V21M15.500 0V21M0 5.500H21M0 10.500H21M0 15.500H21" stroke="#d8d5c8" />
        </Svg>
        <span className="whitespace-nowrap text-black">0.3175 mm</span>
      </div>

      <div className="mt-3 flex flex-col gap-[7px] pl-1.5">
        {sizeGroups.map((group) => (
          <div key={group.label} className="flex items-center">
            <svg width="20" height={group.bar ? 20 : 28} viewBox={group.bar ? '0 0 20 20' : '0 0 20 28'} fill="none" aria-hidden="true" className={group.bar ? '-my-0.5' : ''}>
              {group.icon}
              {group.bar && <rect y="8" width="20" height="4" rx="2" fill="#000" />}
            </svg>
            <button type="button" aria-label={`${group.label} presets`} className="flex w-[19px] justify-center">
              <Svg size={8}><path d="M0 2H8L4 6Z" fill="#0a14e0" /></Svg>
            </button>
            <div className="flex flex-col gap-px">
              {group.values.map((value, i) => (
                <div key={value} className="flex items-center gap-1">
                  <input
                    aria-label={`${group.label} ${i + 1}`}
                    defaultValue={value}
                    className="h-[15px] w-[36px] bg-black pr-[3px] text-right text-[#ffff38] outline-none"
                  />
                  <span className="h-2.5 w-[5px] rounded-sm bg-gradient-to-r from-[#333] via-[#ccc] to-[#333]" />
                </div>
              ))}
            </div>
          </div>
        ))}
        <button type="button" aria-label="Swap sizes" className="-mt-0.5 ml-12 w-5">
          <svg width="20" height="10" viewBox="0 0 20 10" fill="none">
            <path d="M3 3H12M0 7L3 3L6 7M3 3V8H8M17 3V7M12 3H14M7 8H17M14 5L17 2L20 5" stroke="#000" />
          </svg>
        </button>
      </div>
    </aside>
  );
}

/* ---------- rulers ---------- */

function TopRuler() {
  const marks = Array.from({ length: 20 }, (_, i) => i - 6);
  return (
    <svg className="h-[22px] w-full min-w-0 flex-1" aria-hidden="true">
      {marks.map((m) => {
        const x = 246 + m * 36;
        const big = m % 5 === 0;
        return (
          <g key={m}>
            <path d={`M${x + 0.5} ${big ? 8 : 18}V22`} stroke="#000" />
            {big && <text x={x + 3} y="16" fontSize="11">{m * 10}</text>}
          </g>
        );
      })}
      <path d="M0 21.500H743" stroke="#8a887c" />
      <path d="M440.500 1V22" stroke="#e02020" />
    </svg>
  );
}

function SideRuler() {
  const marks = Array.from({ length: 16 }, (_, i) => i - 4);
  return (
    <svg className="h-full w-6 shrink-0" aria-hidden="true">
      {marks.map((m) => {
        const y = 154 + m * 36;
        const big = m % 5 === 0;
        return (
          <g key={m}>
            <path d={`M${big ? 8 : 20} ${y + 0.5}H24`} stroke="#000" />
            {big && <text transform={`translate(15 ${y + (m > 5 ? 22 : m ? 18 : 8)}) rotate(-90)`} fontSize="11">{m * 10}</text>}
          </g>
        );
      })}
      <path d="M2 342.500H24" stroke="#e02020" />
    </svg>
  );
}

function Workspace() {
  return (
    <main className="flex min-w-0 flex-1 flex-col">
      <div className="flex">
        <div className="w-6 pt-1 pl-1">mm</div>
        <TopRuler />
      </div>
      <div className="flex min-h-0 flex-1">
        <SideRuler />
        <div className="relative min-w-0 flex-1 overflow-hidden border-t border-l border-[#7d7b70] bg-white pr-[22px]">
          <CircuitBoard />
          <svg className="absolute top-[491px] left-[339px]" width="13" height="21" viewBox="0 0 13 21" fill="none" aria-hidden="true">
            <path d="M1 1V17L5 13L8 20L10 19L7.500 12H12Z" fill="#fff" stroke="#000" />
          </svg>
        </div>
      </div>
      <div className="flex h-5 shrink-0 border-t border-black bg-[#f5f4ec]">
        <button type="button" className="relative ml-2 flex h-4 w-14 items-start justify-center">
          <svg className="absolute -top-px left-0" width="56" height="17" viewBox="0 0 56 17" aria-hidden="true">
            <path d="M1 0L6 15.500H48L53 0" fill="#ece9d8" stroke="#000" />
          </svg>
          <span className="relative pr-2 whitespace-nowrap">Board 1</span>
        </button>
      </div>
    </main>
  );
}

/* ---------- macro panel ---------- */

const macros = [
  '3V3', '7X7', '7X7A', '8 sop', '8 sop-poziom', 'C 0805pion', 'C Apion', 'C Apoziom', 'CFPS-73', 'cs4272',
  'DC-10AS 2.1mm Pin', 'filtr_pp9a', 'gabaryt_sterownika', 'gen_CPFS-9', 'lm', 'przekaźnik', 'R0805pion',
  'R0805poziom', 'R1206pion', 'R1206poziom', 'STM32F407VET6', 'STM32F407ZGT6',
];

const arrows = { up: 'M1 6L4 3L7 6', down: 'M1 2L4 5L7 2', left: 'M5 1L2 4L5 7', right: 'M3 1L6 4L3 7' };

function ScrollButton({ dir }) {
  return (
    <button type="button" aria-label={`Scroll ${dir}`} className="flex size-4 shrink-0 items-center justify-center rounded-[2px] border border-[#9db5ee] bg-[#c3d3fc]">
      <Svg size={8}><path d={arrows[dir]} stroke="#4d6185" strokeWidth="2" /></Svg>
    </button>
  );
}

function MacroTree() {
  const [picked, setPicked] = useState('8 sop');
  return (
    <div className="mt-[3px] flex h-[386px] shrink-0 flex-col border border-[#7f9db9] bg-white pr-px pb-0.5">
      <div className="flex min-h-0 flex-1">
        <ul className="min-w-0 flex-1 overflow-hidden pt-0.5" role="tree">
          <li className="flex h-4 items-center pl-2" role="treeitem">
            <span className="mr-[5px] flex size-[9px] items-center justify-center border border-[#7f9db9] bg-white">
              <span className="h-px w-[5px] bg-black" />
            </span>
            <span>moje</span>
          </li>
          {macros.map((name) => (
            <li key={name} role="treeitem" className="flex h-4 items-center pl-3">
              <span className="h-4 w-[17px] shrink-0 border-l border-dotted border-[#a0a0a0]" />
              <span className="flex h-4 w-2 shrink-0 items-center border-l border-dotted border-[#a0a0a0]">
                <span className="w-full border-t border-dotted border-[#a0a0a0]" />
              </span>
              <button
                type="button"
                onClick={() => setPicked(name)}
                className={clsx('h-4 px-0.5 whitespace-nowrap', picked === name && 'bg-[#ece9d8] pr-1')}
              >
                {name}
              </button>
            </li>
          ))}
        </ul>
        <div className="flex w-4 flex-col bg-[#f6f5f0]">
          <ScrollButton dir="up" />
          <div className="mt-3.5 flex h-[250px] flex-col items-center justify-center gap-px rounded-[2px] border border-[#9db5ee] bg-[#c3d3fc]">
            {[1, 2, 3, 4].map((n) => <span key={n} className="h-px w-1.5 bg-[#8ca5df]" />)}
          </div>
          <div className="flex-1" />
          <ScrollButton dir="down" />
        </div>
      </div>
      <div className="flex h-4 shrink-0 bg-[#f6f5f0]">
        <ScrollButton dir="left" />
        <div className="ml-0.5 flex w-[88px] items-center justify-center gap-px rounded-[2px] border border-[#9db5ee] bg-[#c3d3fc]">
          {[1, 2, 3, 4].map((n) => <span key={n} className="h-1.5 w-px bg-[#8ca5df]" />)}
        </div>
        <div className="flex-1" />
        <ScrollButton dir="right" />
        <div className="w-[17px] bg-[#ece9d8]" />
      </div>
    </div>
  );
}

function MacroPreview() {
  const columns = [44, 62, 80, 97];
  return (
    <div className="relative flex-1 overflow-hidden bg-black">
      <svg width="151" height="135" viewBox="0 0 151 135" fill="none" aria-label="8 sop footprint">
        {columns.map((x) => (
          <path key={x} d={`M${x - 1} 10h11v36h-11zM${x - 1} 90h11v35h-11z`} fill="#1f6dff" />
        ))}
        <path d="M35.500 23.500H115.500V50.500L97.500 68.500L115.500 86.500V111.500H35.500Z" stroke="#e0101c" />
        {columns.map((x) => (
          <path key={x} d={`M${x - 1} 23.500h11M${x - 1} 111.500h11`} stroke="#b86ae8" />
        ))}
      </svg>
      <span className="absolute right-1 bottom-0.5 whitespace-nowrap text-[#d8d8d8]">Drag and Drop</span>
    </div>
  );
}

function MacroPanel() {
  return (
    <aside className="flex w-[151px] shrink-0 flex-col">
      <div className="flex h-[18px] shrink-0 items-center bg-black">
        <h2 className="flex-1 text-center text-[13px] text-[#ff6470]">Macros</h2>
        <button type="button" aria-label="Close" className="mr-0.5 flex size-4 items-center justify-center border border-white bg-[#ece9d8]">
          <Svg size={8}><path d="M1 1L7 7M7 1L1 7" stroke="#000" strokeWidth="1.500" /></Svg>
        </button>
      </div>
      <MacroTree />
      <div className="h-[5px] shrink-0 bg-[radial-gradient(#bab7a5_1px,transparent_1px)] bg-[length:4px_4px]" />
      <label className="flex h-[18px] shrink-0 items-center gap-[3px] pl-[3px] whitespace-nowrap">
        <input type="checkbox" className="size-[13px] appearance-none border border-[#1c5180] bg-[#f4f4f0]" />
        Add as component
      </label>
      <div className="flex h-[25px] shrink-0 items-center pl-1">
        <button type="button" aria-label="Save macro">
          <Svg size={16}>
            <path d="M1 1H15V15H2L1 14Z" fill="#0000a0" />
            <path d="M4 1H12V8H4ZM5 10H12V15H5Z" fill="#f0f0f0" />
            <path d="M9 11H12V15H9ZM4 10H6V15H4Z" fill="#000" />
          </Svg>
        </button>
        <button type="button" aria-label="Delete macro" className="ml-1.5">
          <Svg size={16}><path d="M2 3.500H14M6 3V1.500H10V3M3 6.500H13M4.500 7V15.500H12.500V7M6.500 7V15M8.500 7V15M10.500 7V15" stroke="#222" /></Svg>
        </button>
        <button type="button" aria-label="Rotate macro" className="ml-[18px]">
          <Svg size={16}><path d="M13 4A6 6 0 1 0 14 10M14 1V6H9" stroke="#000" strokeWidth="2" /></Svg>
        </button>
        <button type="button" aria-label="Set anchor" className="ml-2">
          <Svg size={16}>
            <circle cx="8" cy="8" r="7" fill="#000" />
            <circle cx="8" cy="8" r="2" fill="#e01010" />
          </Svg>
        </button>
        <button type="button" className="ml-1.5 flex items-center gap-1">
          <Svg size={16}><path d="M8 0V6M5 4L8 7L11 4M5 10H11M3 12.500H13M0 15H16" stroke="#000" strokeWidth="2" /></Svg>
          TOP
        </button>
      </div>
      <div className="h-8 shrink-0 border-t border-l border-[#aca899] bg-[#e9e9e9]" />
      <MacroPreview />
    </aside>
  );
}

/* ---------- status bar ---------- */

const layers = [
  { name: 'C1', color: 'text-[#2f7cff]' },
  { name: 'S1', color: 'text-[#f01414]' },
  { name: 'C2', color: 'text-[#10a818]' },
  { name: 'S2', color: 'text-[#f4f400]' },
  { name: 'O', color: 'text-white' },
];

function StatusCell({ className, children }) {
  return <div className={clsx('flex border-t border-l border-[#aca899]', className)}>{children}</div>;
}

function StatusBar() {
  const [active, setActive] = useState('C1');
  return (
    <footer className="flex h-[39px] shrink-0 gap-1 border-t border-white pl-[3px]">
      <StatusCell className="w-[83px] flex-col pt-[3px] pl-[3px] leading-[15px]">
        <div className="flex justify-between pr-1"><span>X:</span><span>53.944 mm</span></div>
        <div className="flex justify-between pr-1"><span>Y:</span><span>52.222 mm</span></div>
      </StatusCell>
      <StatusCell className="w-[184px] pt-px">
        <div className="flex w-12 flex-col pr-1 text-center">
          <span className="h-[17px] border-b border-[#aca899]">visible</span>
          <span className="flex-1 pt-0.5">active</span>
        </div>
        {layers.map((layer) => (
          <div key={layer.name} className="flex w-6 flex-col items-center border-r border-[#c9c5b2]">
            <button type="button" className={clsx("h-[17px] w-6 shrink-0 bg-black text-center font-['DejaVu_Sans'] text-xs leading-[17px]", layer.color)}>
              {layer.name}
            </button>
            <input
              type="radio"
              name="active-layer"
              aria-label={`${layer.name} active`}
              checked={active === layer.name}
              onChange={() => setActive(layer.name)}
              className="mt-1 size-[13px] appearance-none rounded-full border border-[#3c6e95] bg-white checked:bg-[radial-gradient(#22a322_3px,white_3px)]"
            />
          </div>
        ))}
        <button type="button" aria-label="Layer help" className="flex-1 text-center">?</button>
      </StatusCell>
      <StatusCell className="w-[37px] items-center justify-center">
        <button type="button" aria-label="Track ends">
          <Svg size={26}>
            <path d="M0 0H26V26H0Z" fill="#808080" />
            <path d="M0 6H9L16 16" stroke="#fff" strokeWidth="6" />
            <circle cx="17" cy="17" r="6" fill="#fff" />
            <path d="M0 6H9L16 16" stroke="#000" strokeWidth="4" />
            <circle cx="17" cy="17" r="3.500" stroke="#000" strokeWidth="3" />
          </Svg>
        </button>
      </StatusCell>
      <StatusCell className="w-[37px] items-center justify-center">
        <button type="button" aria-label="Pad centre">
          <Svg size={26}>
            <path d="M13 0V26M0 13H26" stroke="#808080" strokeWidth="1.500" />
            <circle cx="13" cy="13" r="7.500" fill="#808080" />
            <circle cx="13" cy="13" r="3.500" fill="#fff" />
            <path d="M13 9V17M9 13H17" stroke="#808080" />
          </Svg>
        </button>
      </StatusCell>
      <StatusCell className="w-[37px] items-center justify-center">
        <button type="button" aria-label="Outline off">
          <Svg size={28}>
            <path d="M3 22Q-1 16 7 14Q13 15 15 9Q22 2 27 6Q27 12 20 13Q13 17 11 21Q7 25 3 22Z" stroke="#333" strokeWidth="2.500" />
            <path d="M3 2L25 26M25 2L3 26" stroke="#e80c0c" strokeWidth="2" />
          </Svg>
        </button>
      </StatusCell>
      <StatusCell className="flex-1 items-center pl-1.5">
        <div className="h-px w-full bg-[#b9b5a3]" />
      </StatusCell>
    </footer>
  );
}

export default function App() {
  return (
    <div className="flex h-screen min-h-[692px] flex-col overflow-hidden bg-[#ece9d8] font-['DejaVu_Sans_Condensed','DejaVu_Sans',sans-serif] text-[11px] leading-4 text-black">
      <Toolbar />
      <div className="flex min-h-0 flex-1 border-t border-white">
        <Sidebar />
        <Workspace />
        <div className="w-[7px] shrink-0 bg-[radial-gradient(#bab7a5_1px,transparent_1px)] bg-[length:4px_4px]" />
        <MacroPanel />
      </div>
      <StatusBar />
    </div>
  );
}
